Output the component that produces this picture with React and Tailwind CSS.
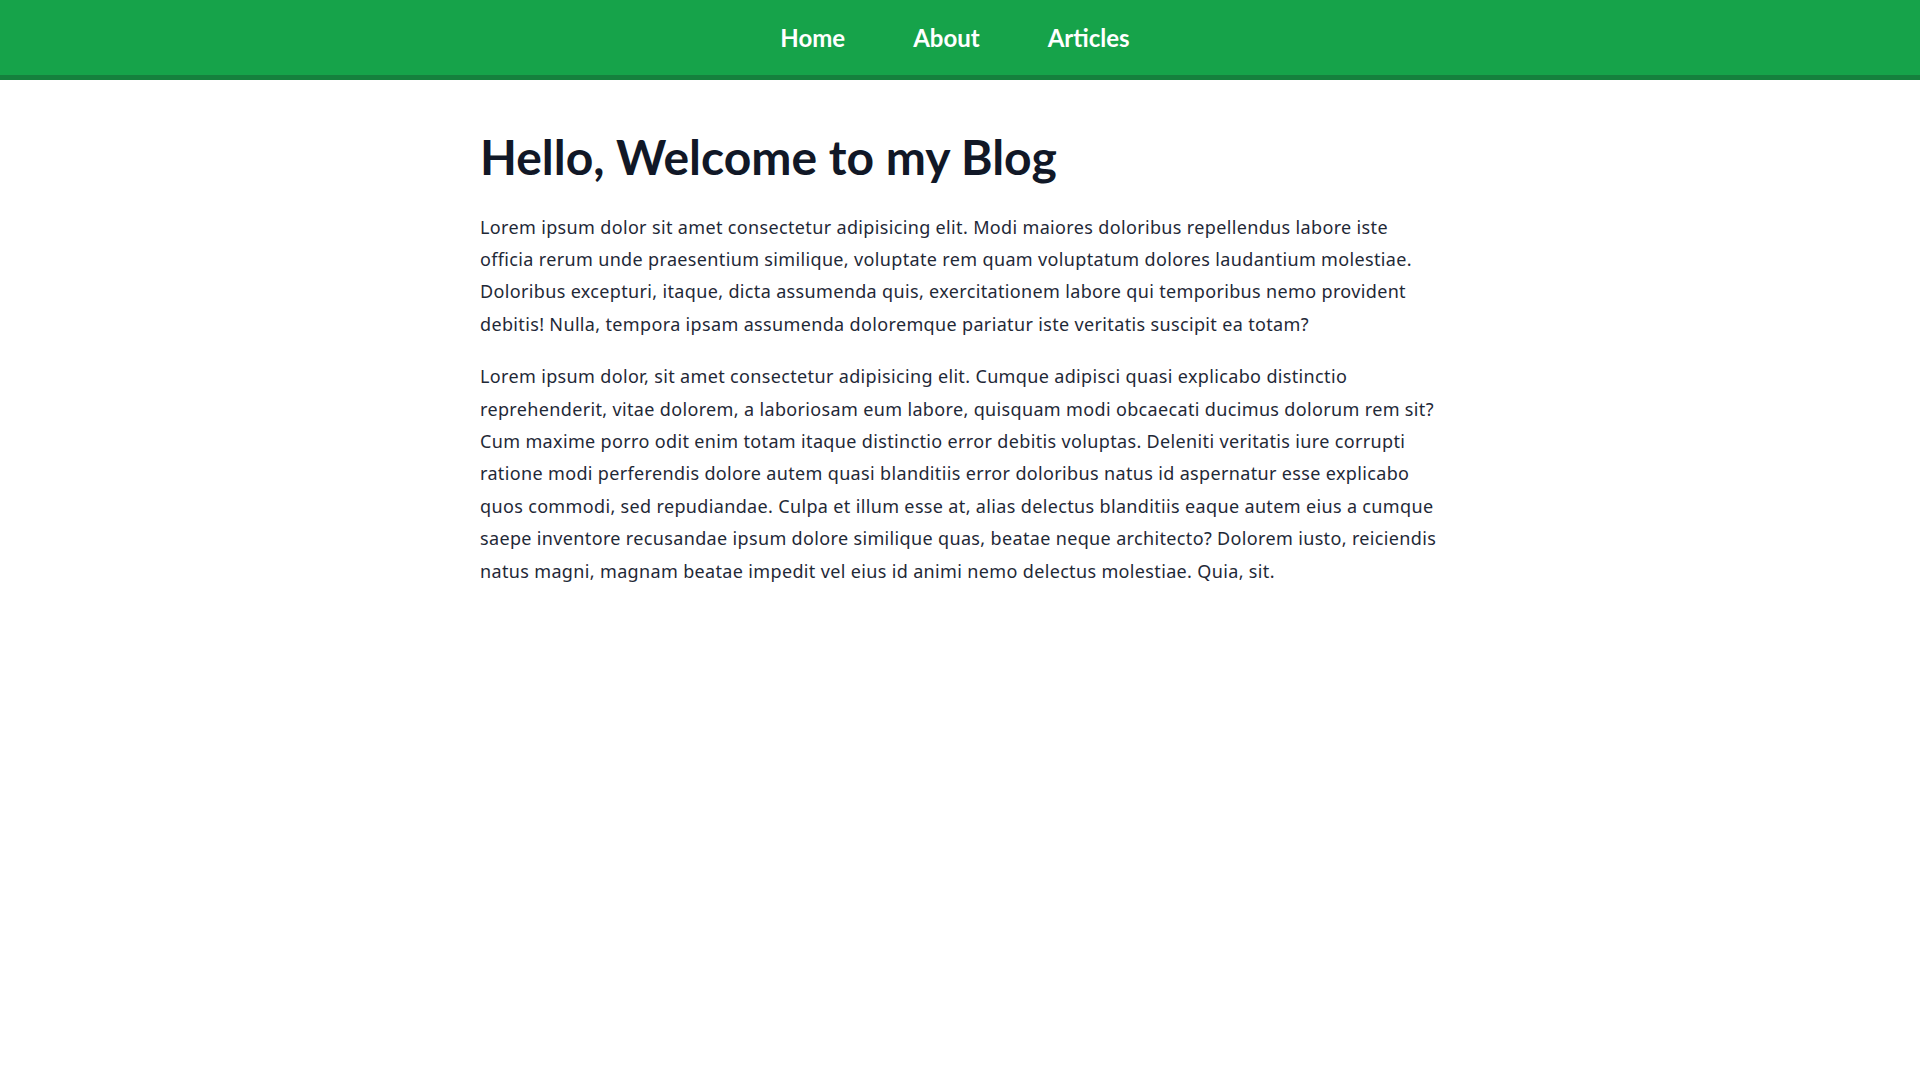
import React from 'react';

const links = ['Home', 'About', 'Articles'];

const App = () => {
  return (
    <div className="min-h-screen bg-white text-gray-900">
      {/* Navbar */}
      <nav className="bg-[#16a34a] border-b-[5px] border-[#15803d]">
        <ul className="flex justify-center items-center h-[75px] pr-[10px] font-['Lato',sans-serif]">
          {links.map((l) => (
            <li key={l}>
              <a href="#" className="block px-[34px] text-white text-[24px] font-bold">
                {l}
              </a>
            </li>
          ))}
        </ul>
      </nav>

      {/* Content */}
      <main className="max-w-[960px] mx-auto pt-[48px]">
        <h1 className="font-['Lato',sans-serif] text-[48px] font-bold leading-[1.2] mb-[25px] text-[#111827]">
          Hello, Welcome to my Blog
        </h1>
        <div className="font-['Noto_Sans',sans-serif] text-[18px] leading-[1.8] tracking-[0.35px] text-[#1f2937]">
          <p className="mb-[20px]">
            Lorem ipsum dolor sit amet consectetur adipisicing elit. Modi maiores doloribus repellendus labore iste officia rerum unde praesentium similique, voluptate rem quam voluptatum dolores laudantium molestiae. Doloribus excepturi, itaque, dicta assumenda quis, exercitationem labore qui temporibus nemo provident debitis! Nulla, tempora ipsam assumenda doloremque pariatur iste veritatis suscipit ea totam?
          </p>
          <p>
            Lorem ipsum dolor, sit amet consectetur adipisicing elit. Cumque adipisci quasi explicabo distinctio reprehenderit, vitae dolorem, a laboriosam eum labore, quisquam modi obcaecati ducimus dolorum rem sit? Cum maxime porro odit enim totam itaque distinctio error debitis voluptas. Deleniti veritatis iure corrupti ratione modi perferendis dolore autem quasi blanditiis error doloribus natus id aspernatur esse explicabo quos commodi, sed repudiandae. Culpa et illum esse at, alias delectus blanditiis eaque autem eius a cumque saepe inventore recusandae ipsum dolore similique quas, beatae neque architecto? Dolorem iusto, reiciendis natus magni, magnam beatae impedit vel eius id animi nemo delectus molestiae. Quia, sit.
          </p>
        </div>
      </main>
    </div>
  );
};

export default App;
